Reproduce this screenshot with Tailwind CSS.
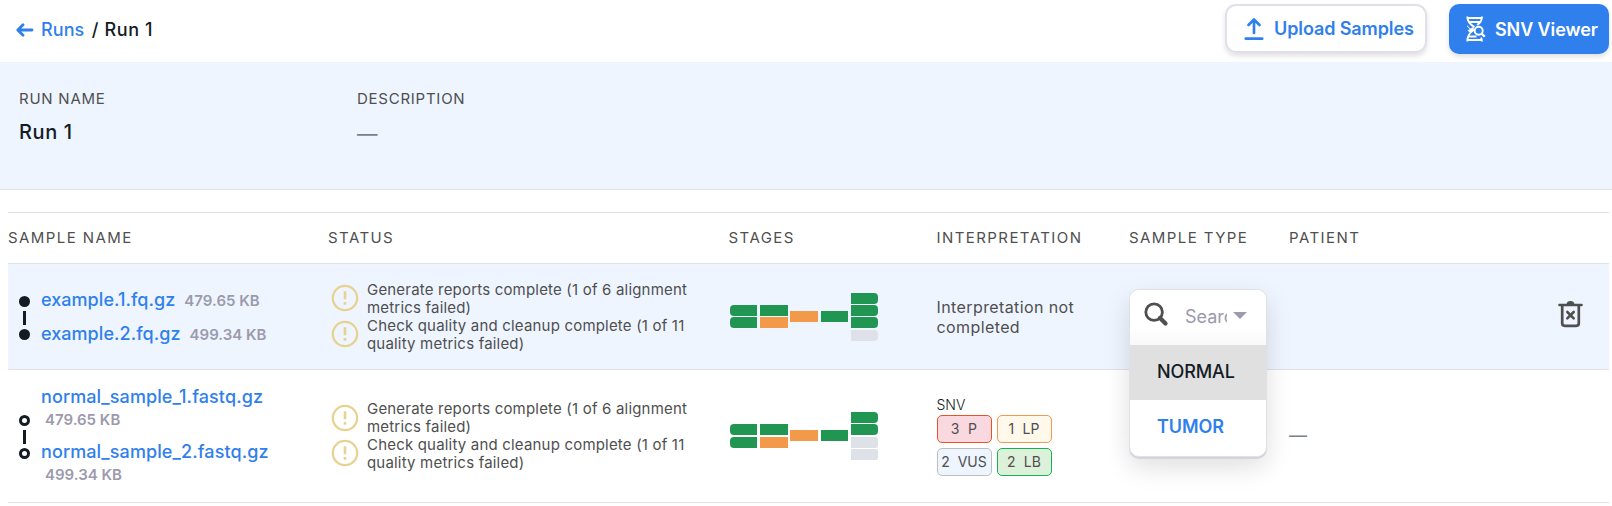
<!DOCTYPE html>
<html lang="en">
<head>
<meta charset="utf-8">
<title>Run 1</title>
<script src="https://cdn.jsdelivr.net/npm/@tailwindcss/browser@4"></script>
</head>
<body class="bg-white text-[#131c24] font-['Inter',sans-serif] w-[1612px] h-[506px] overflow-hidden">
<svg class="hidden">
  <symbol id="warn" viewBox="0 0 24 24"><path fill="#e8d292" d="M11 15h2v2h-2zm0-8h2v6h-2zm.99-5C6.47 2 2 6.48 2 12s4.47 10 9.99 10C17.52 22 22 17.52 22 12S17.52 2 11.99 2zM12 20.3a8.3 8.3 0 1 1 0-16.6 8.3 8.3 0 0 1 0 16.6z"/></symbol>
</svg>

<header class="h-[62px] flex justify-between pl-4 pr-[3px]">
  <div class="flex items-center h-[59px] text-[18px] font-medium">
    <svg class="w-[18px] h-[14px] mr-[7px]" viewBox="0 0 18 14" fill="none" stroke="#2f80ed" stroke-width="2.8" stroke-linecap="round" stroke-linejoin="round"><path d="M16 7H2M7 1.8 1.8 7 7 12.2"/></svg>
    <span class="text-[#2f80ed] tracking-[0.1px]">Runs</span><span class="whitespace-pre ml-[2px] tracking-[0.6px]"> / Run 1</span>
  </div>
  <div class="flex gap-[22px] pt-1 text-[18px] font-semibold">
    <div class="w-[202px] h-[49px] flex items-center border-2 border-[#e0e0e9] rounded-[11px] pl-[17px] shadow-[0_3px_5px_rgba(0,0,0,0.12)] text-[#2f80ed]">
      <svg class="w-5 h-6 mr-[10px]" viewBox="0 0 20 24" fill="none" stroke="#2f80ed" stroke-width="2.7" stroke-linecap="round" stroke-linejoin="round"><path d="M10 16V3M4.500 8 10 2.500 15.500 8M1.800 21.700H18.200"/></svg>
      <span class="whitespace-nowrap tracking-[-0.1px]">Upload Samples</span>
    </div>
    <div class="w-[160px] h-[50px] flex items-center bg-[#2f80ed] rounded-[10px] pl-[17px] shadow-[0_3px_5px_rgba(0,0,0,0.12)] text-white">
      <svg class="w-5 h-[26px] mr-[9px]" viewBox="0 0 20 26" fill="none" stroke="#fff" stroke-width="1.9"><path d="M1.300.5C1.300 6 4 8.500 8.500 11M16 .5c0 4-1.500 6.500-5 8.500M1.300 25.500C1.300 20 3.500 16.500 8 13.800M16 25.500c0-1.500-.4-2.600-1-3.800M2 2h13.500M3 6h11.500M3 20.500h7.500M2 24h13.500"/><circle cx="12.700" cy="14.700" r="4"/><path stroke-width="2.300" d="m15.600 17.600 3.200 3.200"/><path d="M1 9.800 6.500 15" stroke-width="1"/><path d="M1.500 14.500 8 10.500l-.5 4.500-3 2z" fill="#fff" stroke="none"/></svg>
      <span class="whitespace-nowrap tracking-[-0.1px]">SNV Viewer</span>
    </div>
  </div>
</header>

<section class="h-[128px] bg-[#eef5ff] border-b border-[#e0e0e9] flex pl-[19px] pt-[27px]">
  <div class="w-[338px]">
    <div class="text-[15px] leading-5 tracking-[0.75px] text-[#4f4f4f]">RUN NAME</div>
    <div class="mt-[9px] text-[20px] leading-7 font-medium tracking-[0.6px]">Run 1</div>
  </div>
  <div>
    <div class="text-[15px] leading-5 tracking-[0.75px] text-[#4f4f4f]">DESCRIPTION</div>
    <div class="mt-[11px] text-[20.5px] leading-7 text-[#7b8088]">—</div>
  </div>
</section>

<main class="mt-[22px] ml-2 mr-[3px] border-t border-[#e0e0e9]">
  <div class="grid grid-cols-[320px_400.500px_208px_192.500px_160px_1fr] h-[51px] border-b border-[#e0e0e9] pt-[15px] text-[15px] leading-5 tracking-[1.43px] text-[#4f4f4f]">
    <div>SAMPLE NAME</div><div>STATUS</div><div>STAGES</div><div>INTERPRETATION</div><div>SAMPLE TYPE</div><div>PATIENT</div>
  </div>

  <div class="grid grid-cols-[320px_401px_207.500px_192.500px_160px_1fr] h-[106px] border-b border-[#e0e0e9] bg-[#eef5ff]">
    <div class="flex pl-[11px]">
      <svg class="w-[11px] h-11 mt-8 mr-[11px]" viewBox="0 0 11 44" fill="#131c24"><circle cx="5.500" cy="5.500" r="5.500"/><circle cx="5.500" cy="38.500" r="5.500"/><path d="M4 15h3v14H4z"/></svg>
      <div class="pt-[19px] leading-[33px] text-[18px] font-medium text-[#2f80ed] tracking-[0.05px]">
        <div>example.1.fq.gz<span class="ml-[9px] text-[15px] font-semibold text-[#9c9aad] tracking-normal">479.65 KB</span></div>
        <div>example.2.fq.gz<span class="ml-[9px] text-[15px] font-semibold text-[#9c9aad] tracking-normal">499.34 KB</span></div>
      </div>
    </div>
    <div class="pt-[17px] text-[15px] leading-[18px] text-[#4f4f4f] tracking-[0.19px]">
      <div class="flex gap-[6px] h-9"><svg class="w-8 h-8 mt-px shrink-0 ml-px"><use href="#warn"/></svg><div>Generate reports complete (1 of 6 alignment<br>metrics failed)</div></div>
      <div class="flex gap-[6px] h-9"><svg class="w-8 h-8 mt-px shrink-0 ml-px"><use href="#warn"/></svg><div>Check quality and cleanup complete (1 of 11<br>quality metrics failed)</div></div>
    </div>
    <div class="pt-[28.7px]">
      <div class="flex items-center gap-[2.85px] h-[47.9px] pl-[0.95px]">
        <div class="flex flex-col gap-[1.3px]"><i class="w-[27.4px] h-[11px] bg-[#219653] rounded-l-[4px]"></i><i class="w-[27.4px] h-[11px] bg-[#219653] rounded-l-[4px]"></i></div>
        <div class="flex flex-col gap-[1.3px]"><i class="w-[27.4px] h-[11px] bg-[#219653]"></i><i class="w-[27.4px] h-[11px] bg-[#f2994a]"></i></div>
        <i class="w-[27.4px] h-[11px] bg-[#f2994a]"></i>
        <i class="w-[27.4px] h-[11px] bg-[#219653]"></i>
        <div class="flex flex-col gap-[1.3px]"><i class="w-[27.4px] h-[11px] bg-[#219653] rounded-r-[4px]"></i><i class="w-[27.4px] h-[11px] bg-[#219653] rounded-r-[4px]"></i><i class="w-[27.4px] h-[11px] bg-[#219653] rounded-r-[4px]"></i><i class="w-[27.4px] h-[11px] bg-[#dfe1e8] rounded-r-[4px]"></i></div>
      </div>
    </div>
    <div class="pt-[33px] text-[16px] leading-5 text-[#4f4f4f] tracking-[0.4px]">Interpretation not<br>completed</div>
    <div class="relative">
      <div class="absolute z-10 left-0 top-[25px] w-[138px] h-[168px] bg-white border border-[#e0e0e9] rounded-[10px] overflow-hidden shadow-[0_2px_0_#d4d5da,0_10px_26px_rgba(0,0,0,0.13)] text-[18px]">
        <div class="h-[55px] flex bg-linear-to-b from-white from-70% to-[#f8f8f8]">
          <svg class="w-[25px] h-[25px] mt-3 ml-[14px] shrink-0" viewBox="0 0 25 25" fill="none" stroke="#4f4f4f"><circle cx="10.100" cy="10.100" r="8.300" stroke-width="2.800"/><path d="m16 16 5.500 5.500" stroke-width="4.200" stroke-linecap="round"/></svg>
          <div class="w-[42px] overflow-hidden ml-4 mt-[15px] leading-6 text-[#9c9aad]">Search</div>
          <svg class="w-[14px] h-[7px] mt-[22px] ml-[6px]" viewBox="0 0 14 7"><path d="M0 0h14L7 7z" fill="#9c9aad"/></svg>
        </div>
        <div class="h-[55px] bg-[#e0e0e0] pl-[27px] leading-[54px] font-medium tracking-[-0.1px]">NORMAL</div>
        <div class="h-[56px] pl-[27px] leading-[54px] font-semibold text-[#2f80ed] tracking-[-0.1px]">TUMOR</div>
      </div>
    </div>
    <div class="flex justify-end pr-[26px] pt-9">
      <svg class="w-[25px] h-[28px]" viewBox="0 0 25 28" fill="none" stroke="#4f4f4f" stroke-width="2.700" stroke-linecap="round" stroke-linejoin="round"><path d="M1.500 5h22M4.200 5.500v17.800a2.500 2.500 0 0 0 2.500 2.500h11.600a2.500 2.500 0 0 0 2.500-2.500V5.500"/><path d="M8.500 4.200C9 1.800 10 1 12.500 1s3.500.8 4 3.200z" fill="#4f4f4f" stroke="none"/><path d="m9.300 12 6.400 6.400M15.700 12l-6.400 6.400" stroke-width="2.600"/></svg>
    </div>
  </div>

  <div class="grid grid-cols-[320px_401px_207.500px_192.500px_160px_1fr] h-[133px] border-b border-[#e0e0e9]">
    <div class="flex pl-[11px]">
      <svg class="w-[11px] h-11 mt-[45px] mr-[11px]" viewBox="0 0 11 44" fill="none" stroke="#131c24" stroke-width="3"><circle cx="5.500" cy="5.500" r="4"/><circle cx="5.500" cy="38.500" r="4"/><path d="M5.500 15v14"/></svg>
      <div class="pt-[10px] text-[18px] font-medium text-[#2f80ed] tracking-[0.1px]">
        <div class="h-[55px] leading-[33px]">normal_sample_1.fastq.gz<div class="ml-1 leading-[22px] -mt-[4px] text-[15px] font-semibold text-[#9c9aad] tracking-normal">479.65 KB</div></div>
        <div class="h-[55px] leading-[33px]">normal_sample_2.fastq.gz<div class="ml-1 leading-[22px] -mt-[4px] text-[15px] font-semibold text-[#9c9aad] tracking-normal">499.34 KB</div></div>
      </div>
    </div>
    <div class="pt-[30px] text-[15px] leading-[18px] text-[#4f4f4f] tracking-[0.19px]">
      <div class="flex gap-[6px] h-9"><svg class="w-8 h-8 mt-[2px] shrink-0 ml-px"><use href="#warn"/></svg><div>Generate reports complete (1 of 6 alignment<br>metrics failed)</div></div>
      <div class="flex gap-[6px] h-9"><svg class="w-8 h-8 mt-px shrink-0 ml-px"><use href="#warn"/></svg><div>Check quality and cleanup complete (1 of 11<br>quality metrics failed)</div></div>
    </div>
    <div class="pt-[42px]">
      <div class="flex items-center gap-[2.85px] h-[47.9px] pl-[0.95px]">
        <div class="flex flex-col gap-[1.3px]"><i class="w-[27.4px] h-[11px] bg-[#219653] rounded-l-[4px]"></i><i class="w-[27.4px] h-[11px] bg-[#219653] rounded-l-[4px]"></i></div>
        <div class="flex flex-col gap-[1.3px]"><i class="w-[27.4px] h-[11px] bg-[#219653]"></i><i class="w-[27.4px] h-[11px] bg-[#f2994a]"></i></div>
        <i class="w-[27.4px] h-[11px] bg-[#f2994a]"></i>
        <i class="w-[27.4px] h-[11px] bg-[#219653]"></i>
        <div class="flex flex-col gap-[1.3px]"><i class="w-[27.4px] h-[11px] bg-[#219653] rounded-r-[4px]"></i><i class="w-[27.4px] h-[11px] bg-[#219653] rounded-r-[4px]"></i><i class="w-[27.4px] h-[11px] bg-[#dfe1e8] rounded-r-[2px]"></i><i class="w-[27.4px] h-[11px] bg-[#dfe1e8] rounded-r-[2px]"></i></div>
      </div>
    </div>
    <div class="pt-[25px] text-[14px] text-[#4f4f4f]">
      <div class="h-5 leading-5 text-[#131c24] font-light">SNV</div>
      <div class="grid grid-cols-[55px_55px] gap-[5px] leading-[25px] text-center whitespace-pre">
        <div class="h-7 border border-[#eb5129] bg-[#f9d9df] rounded-[5px] tracking-[0.3px]">3  P</div>
        <div class="h-7 border border-[#f2994a] bg-[#fff9ec] rounded-[5px] tracking-[0.1px]">1  LP</div>
        <div class="h-7 border border-[#bdbdbd] bg-[#eef5ff] rounded-[5px] tracking-[0px]">2  VUS</div>
        <div class="h-7 border border-[#14b253] bg-[#ddf1da] rounded-[5px] tracking-[0.1px]">2  LB</div>
      </div>
    </div>
    <div></div>
    <div class="pt-[54px] text-[18px] leading-6 text-[#7b8088]">—</div>
  </div>
</main>
</body>
</html>
